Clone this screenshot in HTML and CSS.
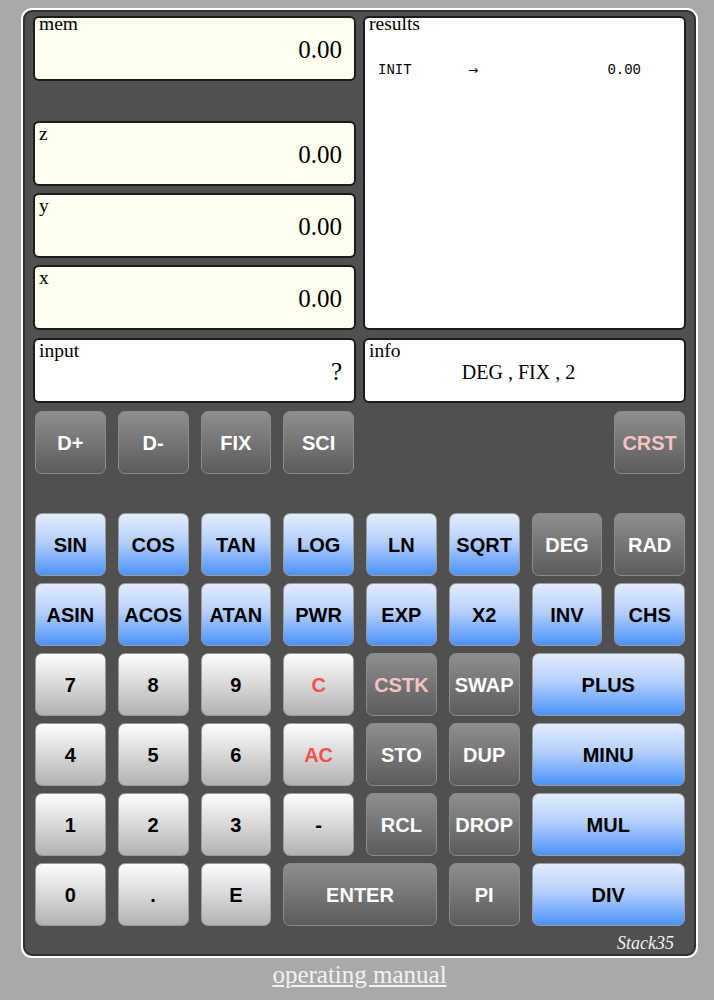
FILE: index.html
```html
<!DOCTYPE html>
<html>
<head>
<meta charset="utf-8">
<title>Stack35</title>
<link rel="stylesheet" href="styles.css">
</head>
<body>
<div class="calc">
  <div class="displays">
    <div class="stack">
      <div class="disp ivory mem"><div class="lbl">mem</div><div class="val">0.00</div></div>
      <div class="disp ivory"><div class="lbl low">z</div><div class="val">0.00</div></div>
      <div class="disp ivory"><div class="lbl low">y</div><div class="val">0.00</div></div>
      <div class="disp ivory"><div class="lbl low">x</div><div class="val">0.00</div></div>
    </div>
    <div class="disp paper results">
      <div class="lbl">results</div>
      <div class="log"><span>INIT</span><span class="arrow">→</span><span class="num">0.00</span></div>
    </div>
    <div class="disp paper"><div class="lbl low">input</div><div class="val">?</div></div>
    <div class="disp paper"><div class="lbl low">info</div><div class="val info">DEG , FIX , 2</div></div>
  </div>

  <div class="keys toprow">
    <button class="key gray">D+</button>
    <button class="key gray">D-</button>
    <button class="key gray">FIX</button>
    <button class="key gray">SCI</button>
    <button class="key gray pink c8">CRST</button>
  </div>

  <div class="keys pad">
    <button class="key blue">SIN</button>
    <button class="key blue">COS</button>
    <button class="key blue">TAN</button>
    <button class="key blue">LOG</button>
    <button class="key blue">LN</button>
    <button class="key blue">SQRT</button>
    <button class="key gray">DEG</button>
    <button class="key gray">RAD</button>

    <button class="key blue">ASIN</button>
    <button class="key blue">ACOS</button>
    <button class="key blue">ATAN</button>
    <button class="key blue">PWR</button>
    <button class="key blue">EXP</button>
    <button class="key blue">X2</button>
    <button class="key blue">INV</button>
    <button class="key blue">CHS</button>

    <button class="key light">7</button>
    <button class="key light">8</button>
    <button class="key light">9</button>
    <button class="key light red">C</button>
    <button class="key gray pink">CSTK</button>
    <button class="key gray">SWAP</button>
    <button class="key blue wide">PLUS</button>

    <button class="key light">4</button>
    <button class="key light">5</button>
    <button class="key light">6</button>
    <button class="key light red">AC</button>
    <button class="key gray">STO</button>
    <button class="key gray">DUP</button>
    <button class="key blue wide">MINU</button>

    <button class="key light">1</button>
    <button class="key light">2</button>
    <button class="key light">3</button>
    <button class="key light">-</button>
    <button class="key gray">RCL</button>
    <button class="key gray">DROP</button>
    <button class="key blue wide">MUL</button>

    <button class="key light">0</button>
    <button class="key light">.</button>
    <button class="key light">E</button>
    <button class="key gray wide">ENTER</button>
    <button class="key gray">PI</button>
    <button class="key blue wide">DIV</button>
  </div>

  <div class="brand">Stack35</div>
</div>
<div class="foot"><a href="#">operating manual</a></div>
</body>
</html>
```

FILE: styles.css
```css
html, body {
  margin: 0;
  padding: 0;
}
body {
  background: #a9a9a9;
  font-family: "Liberation Serif", "Times New Roman", serif;
}
.calc {
  box-sizing: border-box;
  width: 677px;
  margin: 8px 0 0 21px;
  padding: 6px 10px 3px 10px;
  background: #505050;
  border: 2px solid #fff;
  border-radius: 11px;
  box-shadow: inset 0 0 0 2px #303030;
}
.displays {
  display: grid;
  grid-template-columns: 323px 323px;
  grid-template-rows: 314px 65px;
  column-gap: 7px;
  row-gap: 8px;
}
.stack {
  display: flex;
  flex-direction: column;
  gap: 7px;
}
.disp {
  box-sizing: border-box;
  height: 65px;
  border: 2px solid #1c1c1c;
  border-radius: 6px;
  color: #000;
}
.disp.mem {
  margin-bottom: 33px;
}
.disp.results {
  height: 314px;
}
.ivory {
  background: #fffff0;
}
.paper {
  background: #fff;
}
.lbl {
  font-size: 19.5px;
  line-height: 10px;
  padding-left: 4px;
  margin-top: 1px;
  height: 10px;
}
.lbl.low {
  margin-top: 6px;
}
.val {
  margin-top: 8px;
  padding-right: 12px;
  text-align: right;
  font-size: 25px;
  line-height: 25px;
}
.lbl.low + .val {
  margin-top: 3px;
}
.lbl.low + .val.info {
  margin-top: 6px;
  font-size: 20px;
  line-height: 20px;
  text-align: center;
  padding-right: 12px;
}
.log {
  display: grid;
  grid-template-columns: 90px auto 1fr;
  margin-top: 34px;
  padding: 0 43px 0 13px;
  font-family: "Liberation Mono", "Courier New", monospace;
  font-size: 14px;
  line-height: 14.5px;
}
.log .arrow {
  font-family: "DejaVu Sans", sans-serif;
  font-size: 12px;
}
.log .num {
  text-align: right;
}
.keys {
  display: grid;
  grid-template-columns: repeat(8, 1fr);
  column-gap: 12px;
  row-gap: 7px;
  margin: 0 1px 0 2px;
  grid-auto-rows: 63px;
}
.toprow {
  margin-top: 8px;
}
.pad {
  margin-top: 39px;
}
.c8 {
  grid-column: 8;
}
.wide {
  grid-column: span 2;
}
.key {
  box-sizing: border-box;
  margin: 0;
  padding: 2px 0 0 0;
  border: 1px solid #9a9a9a;
  border-radius: 7px;
  font-family: "Liberation Sans", Arial, sans-serif;
  font-weight: bold;
  font-size: 20px;
  color: #000;
  text-align: center;
}
.blue {
  background: linear-gradient(to bottom, #e3ecfd 0%, #b6d0fb 45%, #4b92fa 100%);
  border-color: #9b9b9b;
}
.gray {
  background: linear-gradient(to bottom, #8e8e8e 0%, #5c5c5c 100%);
  border-color: #8a8a8a;
  color: #fff;
}
.light {
  background: linear-gradient(to bottom, #fdfdfd 0%, #dcdcdc 45%, #b2b2b2 100%);
  border-color: #9a9a9a;
}
.red {
  color: #f25050;
}
.pink {
  color: #f6c2c2;
}
.brand {
  margin-top: 7px;
  text-align: right;
  font-style: italic;
  font-size: 18px;
  line-height: 20px;
  color: #f0f0f0;
  padding-right: 12px;
}
.foot {
  width: 677px;
  margin-left: 21px;
  margin-top: 3px;
  text-align: center;
  line-height: 27px;
}
.foot a {
  font-size: 25px;
  color: #f2f2f2;
  text-decoration: underline;
}
```
